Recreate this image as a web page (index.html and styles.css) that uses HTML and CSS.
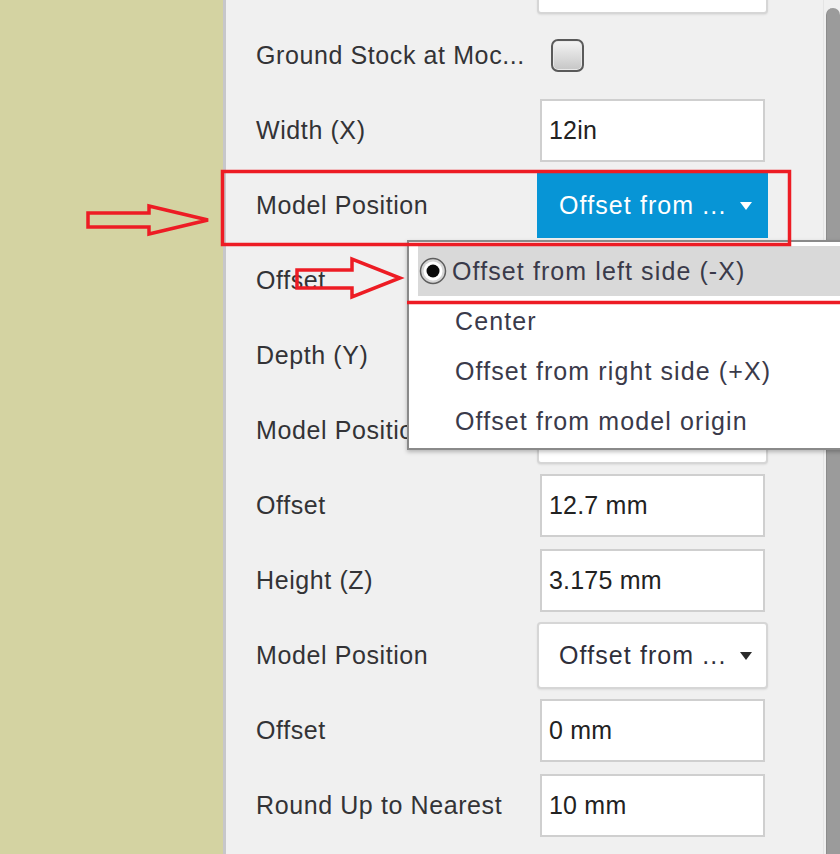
FILE: index.html
```html
<!DOCTYPE html>
<html>
<head>
<meta charset="utf-8">
<link rel="stylesheet" href="styles.css">
</head>
<body>
<div class="screen">
  <div class="canvas"></div>
  <div class="panel">
    <div class="form">
      <div class="row"><span class="label"></span><div class="select"><span class="caret"></span></div></div>
      <div class="row"><span class="label">Ground Stock at Moc...</span><span class="checkbox"></span></div>
      <div class="row"><span class="label">Width (X)</span><div class="field">12in</div></div>
      <div class="row"><span class="label">Model Position</span><div class="select select--active"><span class="select-text">Offset from ...</span><span class="caret"></span></div></div>
      <div class="row"><span class="label">Offset</span><div class="field"></div></div>
      <div class="row"><span class="label">Depth (Y)</span><div class="field"></div></div>
      <div class="row"><span class="label">Model Position</span><div class="select"></div></div>
      <div class="row"><span class="label">Offset</span><div class="field">12.7 mm</div></div>
      <div class="row"><span class="label">Height (Z)</span><div class="field">3.175 mm</div></div>
      <div class="row"><span class="label">Model Position</span><div class="select"><span class="select-text">Offset from ...</span><span class="caret"></span></div></div>
      <div class="row"><span class="label">Offset</span><div class="field">0 mm</div></div>
      <div class="row"><span class="label">Round Up to Nearest</span><div class="field">10 mm</div></div>
    </div>
    <div class="scrollbar"><div class="thumb"></div></div>
  </div>

  <div class="menu">
    <div class="menu-item menu-item--selected">
      <svg class="radio" width="28" height="28" viewBox="0 0 28 28">
        <circle cx="14" cy="14" r="12.5" fill="#d6d6d6" stroke="#5e5e5e" stroke-width="1.5"/>
        <circle cx="14" cy="14" r="9.5" fill="#ffffff"/>
        <circle cx="14" cy="14" r="6.5" fill="#0a0a0a"/>
      </svg>
      <span class="menu-text">Offset from left side (-X)</span>
    </div>
    <div class="menu-item"><span class="menu-text">Center</span></div>
    <div class="menu-item"><span class="menu-text">Offset from right side (+X)</span></div>
    <div class="menu-item"><span class="menu-text">Offset from model origin</span></div>
  </div>

  <svg class="annotations" width="840" height="854" viewBox="0 0 840 854">
    <rect x="222.5" y="171.5" width="567" height="73" fill="none" stroke="#ed1c24" stroke-width="3.5"/>
    <line x1="407" y1="302.5" x2="840" y2="302.5" stroke="#ed1c24" stroke-width="3.5"/>
    <polygon points="88,213 149,213 149,206 208,220 149,234 149,227 88,227" fill="none" stroke="#ed1c24" stroke-width="3.5" stroke-linejoin="miter"/>
    <polygon points="297,270 352,270 352,259 400,278 352,297 352,288 297,288" fill="none" stroke="#ed1c24" stroke-width="3.5" stroke-linejoin="miter"/>
  </svg>
</div>
</body>
</html>
```

FILE: styles.css
```css
html, body {
  margin: 0;
  padding: 0;
}

body {
  width: 840px;
  height: 854px;
  overflow: hidden;
  font-family: "Liberation Sans", Arial, sans-serif;
}

.screen {
  position: relative;
  width: 840px;
  height: 854px;
  display: flex;
  overflow: hidden;
}

.canvas {
  width: 223px;
  flex: none;
  background: #d4d3a2;
}

.panel {
  flex: 1;
  display: flex;
  background: #f0f0f0;
  border-left: 3px solid #c7c7ca;
  padding-left: 30px;
  overflow: hidden;
}

.form {
  flex: 1;
  margin-top: -57px;
}

.row {
  height: 75px;
  display: flex;
  align-items: center;
}

.label {
  width: 284px;
  flex: none;
  font-size: 25px;
  letter-spacing: 0.6px;
  color: #333336;
  white-space: nowrap;
}

.field {
  box-sizing: border-box;
  width: 225px;
  height: 63px;
  background: #ffffff;
  border: 2px solid #cfcfcf;
  padding-left: 7px;
  display: flex;
  align-items: center;
  font-size: 25px;
  letter-spacing: 0.2px;
  color: #222222;
}

.select {
  box-sizing: border-box;
  margin-left: -3px;
  width: 231px;
  height: 67px;
  background: #ffffff;
  border: 2px solid #d6d6d6;
  border-radius: 4px;
  box-shadow: 0 1px 2px rgba(0, 0, 0, 0.08);
  padding-left: 20px;
  padding-right: 14px;
  display: flex;
  align-items: center;
  font-size: 25px;
  letter-spacing: 1.1px;
  color: #2f2f3a;
}

.select--active {
  height: 65px;
  background: #0795d6;
  border-color: #0795d6;
  border-radius: 0;
  box-shadow: none;
  color: #ffffff;
}

.select-text {
  white-space: nowrap;
}

.caret {
  margin-left: auto;
  width: 0;
  height: 0;
  border-left: 6px solid transparent;
  border-right: 6px solid transparent;
  border-top: 8px solid #2a2a2a;
}

.select--active .caret {
  border-top-color: #ffffff;
}

.checkbox {
  box-sizing: border-box;
  margin-left: 11px;
  width: 33px;
  height: 33px;
  border: 2px solid #5a5a5a;
  border-radius: 7px;
  background: linear-gradient(#f4f4f4, #c6c6c6);
  box-shadow: inset 0 0 0 1px #e9e9e9;
}

.scrollbar {
  width: 17px;
  flex: none;
  box-sizing: border-box;
  padding-left: 2px;
  padding-top: 8px;
  display: flex;
  flex-direction: column;
  background: #f0f0f0;
  border-left: 1px solid #e4e4e4;
}

.thumb {
  flex: 1;
  background: #9b9b9b;
  border-left: 1px solid #8c8c8c;
  border-radius: 8px 8px 0 0;
}

.menu {
  position: absolute;
  left: 407px;
  top: 240px;
  width: 470px;
  height: 210px;
  box-sizing: border-box;
  background: #ffffff;
  border: 2px solid #8a8a8a;
  box-shadow: 0 2px 4px rgba(0, 0, 0, 0.25);
  padding: 4px 0 2px 9px;
}

.menu-item {
  height: 50px;
  display: flex;
  align-items: center;
  padding-left: 37px;
  font-size: 25px;
  letter-spacing: 1.1px;
  color: #3a3a4a;
  white-space: nowrap;
}

.menu-item--selected {
  background: #d9d9d9;
  padding-left: 1px;
}

.radio {
  flex: none;
  margin-right: 5px;
}

.annotations {
  position: absolute;
  left: 0;
  top: 0;
  pointer-events: none;
}
```
